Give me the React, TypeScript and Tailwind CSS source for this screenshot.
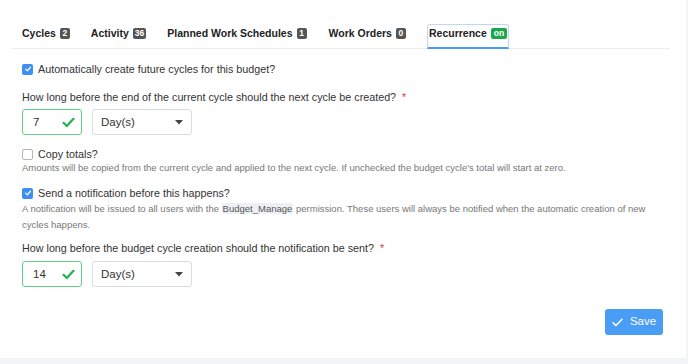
import React from "react";

function Badge({ children, green }: { children: React.ReactNode; green?: boolean }) {
  return (
    <span
      className={
        "ml-[4px] inline-flex h-[11px] min-w-[10px] items-center justify-center rounded-[2px] px-[2px] text-[8.5px] font-bold leading-none text-white " +
        (green ? "bg-[#1aa84a] px-[3px]" : "bg-[#555555]")
      }
    >
      {children}
    </span>
  );
}

function Check({ on }: { on: boolean }) {
  return on ? (
    <span className="flex h-[11px] w-[11px] shrink-0 items-center justify-center rounded-[2px] bg-[#3d8ff0]">
      <svg width="8" height="8" viewBox="0 0 10 10">
        <path d="M2 5.2 L4.2 7.3 L8 2.8" stroke="white" strokeWidth="1.6" fill="none" strokeLinecap="round" strokeLinejoin="round" />
      </svg>
    </span>
  ) : (
    <span className="block h-[11px] w-[11px] shrink-0 rounded-[2px] border border-[#b5b5b5] bg-white" />
  );
}

function NumSel({ value }: { value: string }) {
  return (
    <div className="flex gap-[10px]">
      <div className="flex h-[26px] w-[60px] items-center justify-between rounded-[3px] border border-[#5fcf86] pl-[10px] pr-[6px] text-[11.5px] text-[#333]">
        <span>{value}</span>
        <svg width="13" height="11" viewBox="0 0 13 11">
          <path d="M1.5 5.8 L4.8 9 L11.5 1.8" stroke="#1fb24f" strokeWidth="2.2" fill="none" strokeLinecap="round" strokeLinejoin="round" />
        </svg>
      </div>
      <div className="flex h-[26px] w-[100px] items-center justify-between rounded-[3px] border border-[#d9dce1] pl-[8px] pr-[8px] text-[11.5px] text-[#333]">
        <span>Day(s)</span>
        <svg width="8" height="5" viewBox="0 0 8 5">
          <path d="M0 0 L8 0 L4 4.5 Z" fill="#444" />
        </svg>
      </div>
    </div>
  );
}

export default function App() {
  return (
    <div
      className="flex h-[364px] w-[688px] flex-col bg-[#f3f4f7]"
      style={{ fontFamily: '"Liberation Sans", Arial, sans-serif' }}
    >
      <div className="mr-[2px] flex h-[358px] flex-col bg-white">
        <div className="ml-[12px] mr-[16px] mt-[24px] flex h-[25px] items-stretch border-b border-[#ececec] pl-[10px] text-[10.5px] font-bold leading-[16px] text-[#222]">
          <div className="mr-[21px] flex items-start pt-[1px]"><span className="flex items-center">Cycles<Badge>2</Badge></span></div>
          <div className="mr-[21px] flex items-start pt-[1px]"><span className="flex items-center">Activity<Badge>36</Badge></span></div>
          <div className="mr-[22px] flex items-start pt-[1px]"><span className="flex items-center">Planned Work Schedules<Badge>1</Badge></span></div>
          <div className="mr-[21px] flex items-start pt-[1px]"><span className="flex items-center">Work Orders<Badge>0</Badge></span></div>
          <div className="-mb-px flex items-start rounded-t-[3px] border border-b-2 border-[#bcd9fb] border-b-[#4a9df5] pl-[1px] pr-[1px]">
            <span className="flex items-center">Recurrence<Badge green>on</Badge></span>
          </div>
        </div>

        <div className="flex flex-col px-[22px] text-[10.75px] leading-[16px] text-[#333]">
          <label className="mt-[12px] flex items-center gap-[5px]">
            <Check on />
            <span>Automatically create future cycles for this budget?</span>
          </label>

          <div className="mt-[12px] flex items-center">
            <span>How long before the end of the current cycle should the next cycle be created?</span>
            <span className="ml-[6px] text-[#e53935]">*</span>
          </div>
          <div className="mt-[4px]">
            <NumSel value="7" />
          </div>

          <label className="mt-[11px] flex items-center gap-[5px]">
            <Check on={false} />
            <span>Copy totals?</span>
          </label>
          <p className="text-[9.5px] leading-[12px] text-[#777]">
            Amounts will be copied from the current cycle and applied to the next cycle. If unchecked the budget cycle's total will start at zero.
          </p>

          <label className="mt-[11px] flex items-center gap-[5px]">
            <Check on />
            <span>Send a notification before this happens?</span>
          </label>
          <p className="text-[9.5px] leading-[16px] text-[#777]">
            A notification will be issued to all users with the{" "}
            <span className="rounded-[2px] bg-[#eef0f4] px-[1px] text-[#555]">Budget_Manage</span> permission. These users will always be notified when the automatic creation of new cycles happens.
          </p>

          <div className="mt-[7px] flex items-center">
            <span>How long before the budget cycle creation should the notification be sent?</span>
            <span className="ml-[6px] text-[#e53935]">*</span>
          </div>
          <div className="mt-[5px]">
            <NumSel value="14" />
          </div>
        </div>

        <div className="mt-[22px] flex justify-end pr-[23px]">
          <button className="flex h-[26px] w-[58px] items-center justify-center gap-[7px] rounded-[3px] bg-[#4a9df5] text-[11.5px] text-white">
            <svg width="11" height="9" viewBox="0 0 11 9">
              <path d="M1 4.8 L4 7.6 L10 1.2" stroke="white" strokeWidth="1.5" fill="none" strokeLinecap="round" strokeLinejoin="round" />
            </svg>
            Save
          </button>
        </div>
      </div>
    </div>
  );
}
